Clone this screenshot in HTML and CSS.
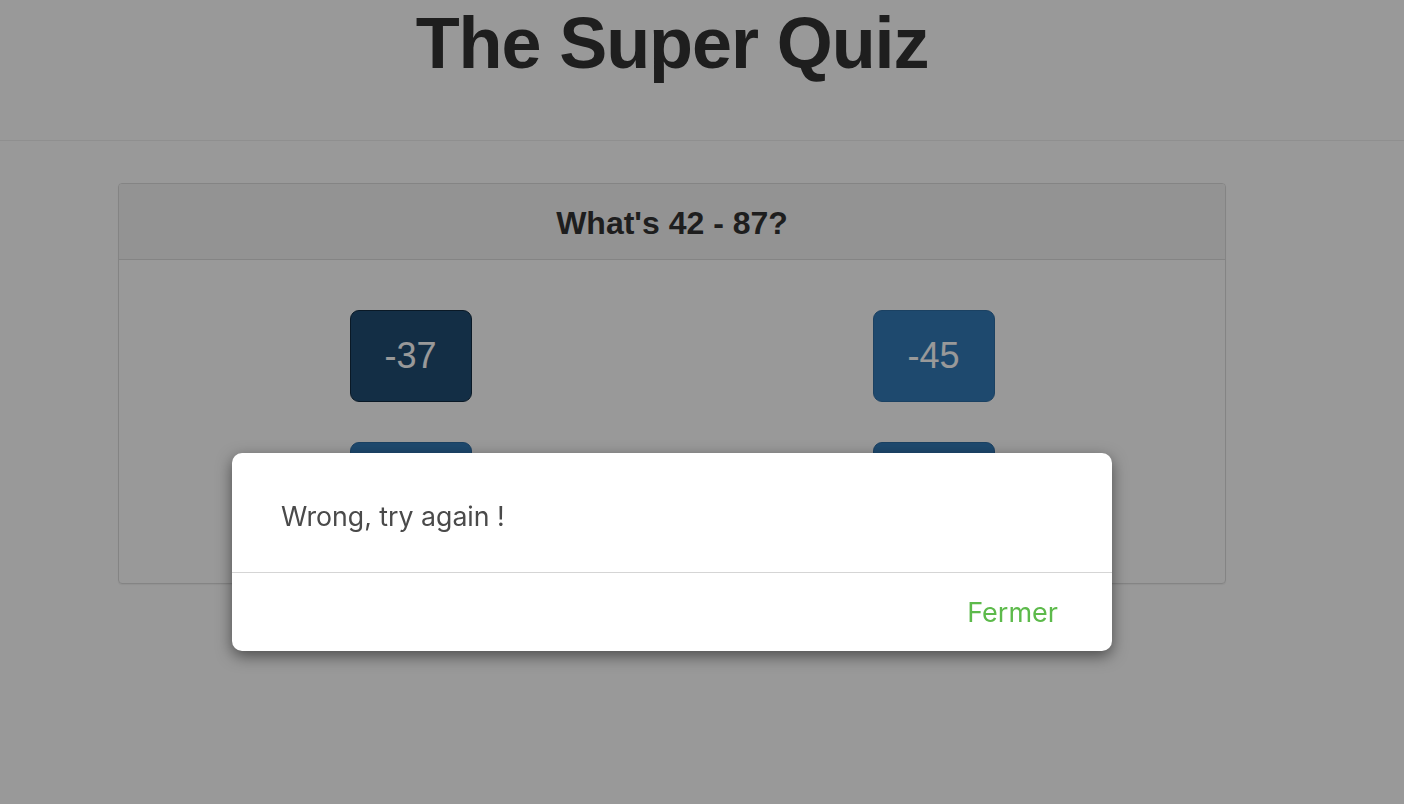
FILE: index.html
```html
<!DOCTYPE html>
<html lang="en">
<head>
<meta charset="utf-8">
<title>The Super Quiz</title>
<link rel="stylesheet" href="styles.css">
</head>
<body>
<div class="app">
  <header class="header">
    <h1 class="title">The Super Quiz</h1>
  </header>
  <section class="panel">
    <div class="panel-heading">What's 42 - 87?</div>
    <div class="panel-body">
      <div class="answer"><button class="btn btn-active">-37</button></div>
      <div class="answer"><button class="btn">-45</button></div>
      <div class="answer"><button class="btn">-52</button></div>
      <div class="answer"><button class="btn">-41</button></div>
    </div>
  </section>
  <div class="overlay"></div>
  <div class="modal">
    <div class="modal-body">Wrong, try again !</div>
    <div class="modal-footer"><span class="modal-action">Fermer</span></div>
  </div>
</div>
</body>
</html>
```
FILE: styles.css
```css
html, body {
  margin: 0;
  padding: 0;
  background: #fff;
}
body {
  font-family: "Liberation Sans", Arial, sans-serif;
  color: #333;
  width: 1404px;
  height: 804px;
  overflow: hidden;
}
.app {
  width: 1344px;
  position: relative;
  height: 804px;
}
.header {
  padding: 7px 0 61px;
  border-bottom: 1px solid #eee;
  width: 1404px;
}
.title {
  margin: 0;
  width: 1344px;
  text-align: center;
  font-size: 72px;
  line-height: 72px;
  font-weight: bold;
  letter-spacing: -1.1px;
  color: #333;
}
.panel {
  margin: 42px 118px 0;
  border: 1px solid #ddd;
  border-radius: 4px;
  box-shadow: 0 1px 1px rgba(0,0,0,.05);
}
.panel-heading {
  background: #f5f5f5;
  border-bottom: 1px solid #ddd;
  border-radius: 3px 3px 0 0;
  padding: 23px 0 20px;
  text-align: center;
  font-size: 32px;
  line-height: 32px;
  font-weight: bold;
  color: #333;
}
.panel-body {
  display: grid;
  grid-template-columns: 1fr 1fr;
  row-gap: 40px;
  padding: 50px 30px 49px;
}
.answer {
  display: flex;
  justify-content: center;
}
.btn {
  width: 122px;
  height: 92px;
  border: 1px solid #2e6da4;
  border-radius: 9px;
  background: #337ab7;
  color: #fff;
  font-family: "Liberation Sans", Arial, sans-serif;
  font-size: 36px;
  padding: 0;
}
.btn-active {
  background: #204d74;
  border-color: #122b40;
}
.overlay {
  position: fixed;
  left: 0;
  top: 0;
  width: 1404px;
  height: 804px;
  background: rgba(0,0,0,0.4);
}
.modal {
  position: absolute;
  left: 232px;
  top: 453px;
  width: 880px;
  background: #fff;
  border-radius: 10px;
  box-shadow: 0 5px 15px rgba(0,0,0,.5);
  font-family: Inter, "Noto Sans", sans-serif;
}
.modal-body {
  padding: 47px 49px 40px;
  font-size: 26.7px;
  line-height: 32px;
  color: #4a4a4a;
  border-bottom: 1px solid #d5d5d5;
}
.modal-footer {
  display: flex;
  justify-content: flex-end;
  padding: 24px 54px 22px;
  font-size: 27px;
  line-height: 32px;
}
.modal-action {
  color: #5dba4b;
}
```
